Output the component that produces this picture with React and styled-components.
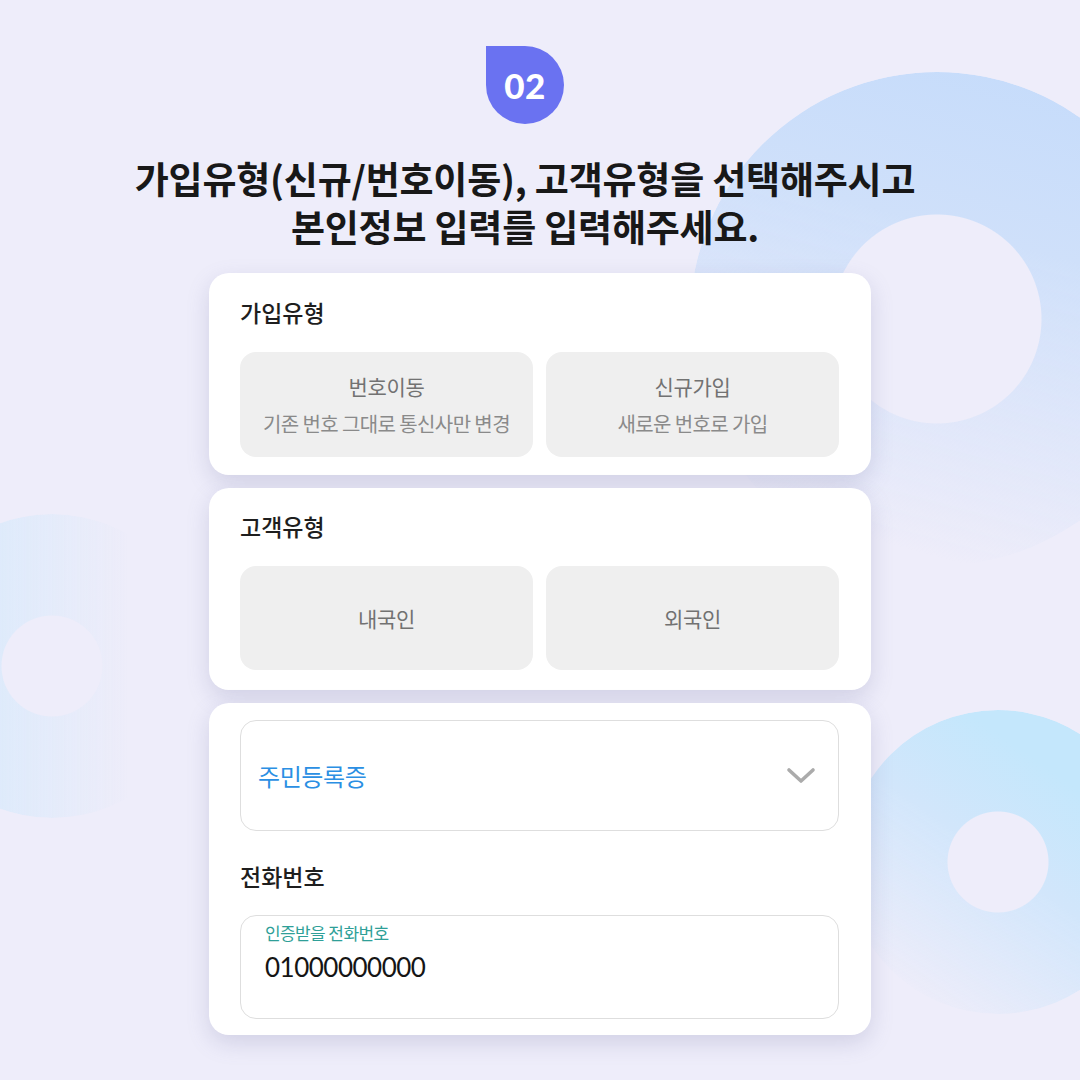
import React from "react";
import styled, { createGlobalStyle } from "styled-components";

const GlobalStyle = createGlobalStyle`
  html, body {
    margin: 0;
    padding: 0;
    background: #eeedfa;
  }
  body {
    font-family: "Noto Sans CJK KR", "Noto Sans", sans-serif;
    color: #1c1c1c;
  }
`;

const Page = styled.div`
  position: relative;
  width: 1080px;
  height: 1080px;
  overflow: hidden;
  background: #eeedfa;
  display: flex;
  flex-direction: column;
  align-items: center;
  padding-top: 46px;
  box-sizing: border-box;
`;

const Ring = styled.div`
  position: absolute;
  left: ${p => p.cx - p.r}px;
  top: ${p => p.cy - p.r}px;
  width: ${p => p.r * 2}px;
  height: ${p => p.r * 2}px;
  border-radius: 50%;
  background: ${p => p.bg};
  -webkit-mask: radial-gradient(circle at center, transparent ${p => p.hole}px, #000 ${p => p.hole + 1}px);
  mask: radial-gradient(circle at center, transparent ${p => p.hole}px, #000 ${p => p.hole + 1}px);
  z-index: 0;
`;

const Content = styled.div`
  position: relative;
  z-index: 1;
  display: flex;
  flex-direction: column;
  align-items: center;
`;

const Badge = styled.div`
  width: 78px;
  height: 78px;
  margin-right: 30px;
  background: #6a72f1;
  border-radius: 0 39px 39px 39px;
  display: flex;
  align-items: center;
  justify-content: center;
  color: #fff;
  font-family: "Lato", "Noto Sans", sans-serif;
  font-weight: 900;
  font-size: 35px;
  letter-spacing: 0.5px;
`;

const Title = styled.h1`
  margin: 30px 30px 0 0;
  text-align: center;
  font-size: 37px;
  font-weight: 700;
  letter-spacing: -0.2px;
  color: #181818;
`;

const TitleLine = styled.span`
  display: block;
  height: 48px;
  line-height: 48px;
  white-space: nowrap;
`;

const Cards = styled.div`
  margin-top: 23px;
  width: 662px;
  display: flex;
  flex-direction: column;
  gap: 13px;
`;

const Card = styled.section`
  background: #fff;
  border-radius: 20px;
  box-shadow: 0 8px 22px rgba(110, 110, 160, 0.22);
  padding: ${p => p.pad || "24px 32px 18px 31px"};
  display: flex;
  flex-direction: column;
`;

const Label = styled.div`
  font-size: 23px;
  line-height: 30px;
  font-weight: 500;
  letter-spacing: 0;
  color: #1e1e1e;
  margin-top: ${p => p.mt || 0}px;
`;

const Options = styled.div`
  margin-top: 25px;
  display: grid;
  grid-template-columns: 1fr 1fr;
  gap: 13px;
`;

const Option = styled.div`
  height: ${p => p.h || 105}px;
  background: #efefef;
  border-radius: 16px;
  display: flex;
  flex-direction: column;
  align-items: center;
  justify-content: center;
  gap: 11px;
`;

const OptionTitle = styled.div`
  font-size: 21px;
  line-height: 28px;
  color: #727272;
  letter-spacing: -0.3px;
`;

const OptionSub = styled.div`
  font-size: 20px;
  line-height: 26px;
  color: #8a8a8a;
  letter-spacing: -0.6px;
`;

const Select = styled.div`
  height: 111px;
  box-sizing: border-box;
  border: 1.5px solid #dedede;
  border-radius: 16px;
  display: flex;
  align-items: center;
  justify-content: space-between;
  padding: 0 22px 0 17px;
`;

const SelectText = styled.span`
  font-size: 24px;
  color: #2b8fe3;
  letter-spacing: -0.4px;
`;

const Field = styled.div`
  margin-top: 24px;
  height: 104px;
  box-sizing: border-box;
  border: 1.5px solid #dedede;
  border-radius: 16px;
  padding: 5px 24px 0;
  display: flex;
  flex-direction: column;
`;

const FieldLabel = styled.div`
  font-size: 17px;
  line-height: 24px;
  color: #2f9f98;
  letter-spacing: -0.6px;
`;

const FieldValue = styled.div`
  margin-top: 7px;
  font-family: "Lato", "Noto Sans", sans-serif;
  font-size: 26px;
  line-height: 30px;
  color: #151515;
  letter-spacing: -0.5px;
`;

const Chevron = () => (
  <svg width="30" height="17" viewBox="0 0 30 17" fill="none">
    <path d="M3 3 L15 14 L27 3" stroke="#ababab" strokeWidth="3.6" strokeLinecap="round" strokeLinejoin="round" />
  </svg>
);

export default function App() {
  return (
    <Page>
      <GlobalStyle />
      <Ring cx={937} cy={319} r={247} hole={104} bg="linear-gradient(195deg, #c4dbfb 0%, #cfe0fa 35%, rgba(238,237,250,0) 88%)" />
      <Ring cx={52} cy={666} r={152} hole={50} bg="linear-gradient(90deg, #d4e9fb 0%, #dbeafb 25%, rgba(238,237,250,0) 75%)" />
      <Ring cx={998} cy={862} r={152} hole={50} bg="linear-gradient(215deg, #c4e7fc 25%, #d2e6fb 50%, rgba(238,237,250,0) 88%)" />
      <Content>
        <Badge>02</Badge>
        <Title>
          <TitleLine>가입유형(신규/번호이동), 고객유형을 선택해주시고</TitleLine>
          <TitleLine>본인정보 입력를 입력해주세요.</TitleLine>
        </Title>
        <Cards>
          <Card>
            <Label>가입유형</Label>
            <Options>
              <Option>
                <OptionTitle>번호이동</OptionTitle>
                <OptionSub>기존 번호 그대로 통신사만 변경</OptionSub>
              </Option>
              <Option>
                <OptionTitle>신규가입</OptionTitle>
                <OptionSub>새로운 번호로 가입</OptionSub>
              </Option>
            </Options>
          </Card>
          <Card pad="23px 32px 20px 31px">
            <Label>고객유형</Label>
            <Options>
              <Option h={104}>
                <OptionTitle>내국인</OptionTitle>
              </Option>
              <Option h={104}>
                <OptionTitle>외국인</OptionTitle>
              </Option>
            </Options>
          </Card>
          <Card pad="17px 32px 16px 31px">
            <Select>
              <SelectText>주민등록증</SelectText>
              <Chevron />
            </Select>
            <Label mt={30}>전화번호</Label>
            <Field>
              <FieldLabel>인증받을 전화번호</FieldLabel>
              <FieldValue>01000000000</FieldValue>
            </Field>
          </Card>
        </Cards>
      </Content>
    </Page>
  );
}
